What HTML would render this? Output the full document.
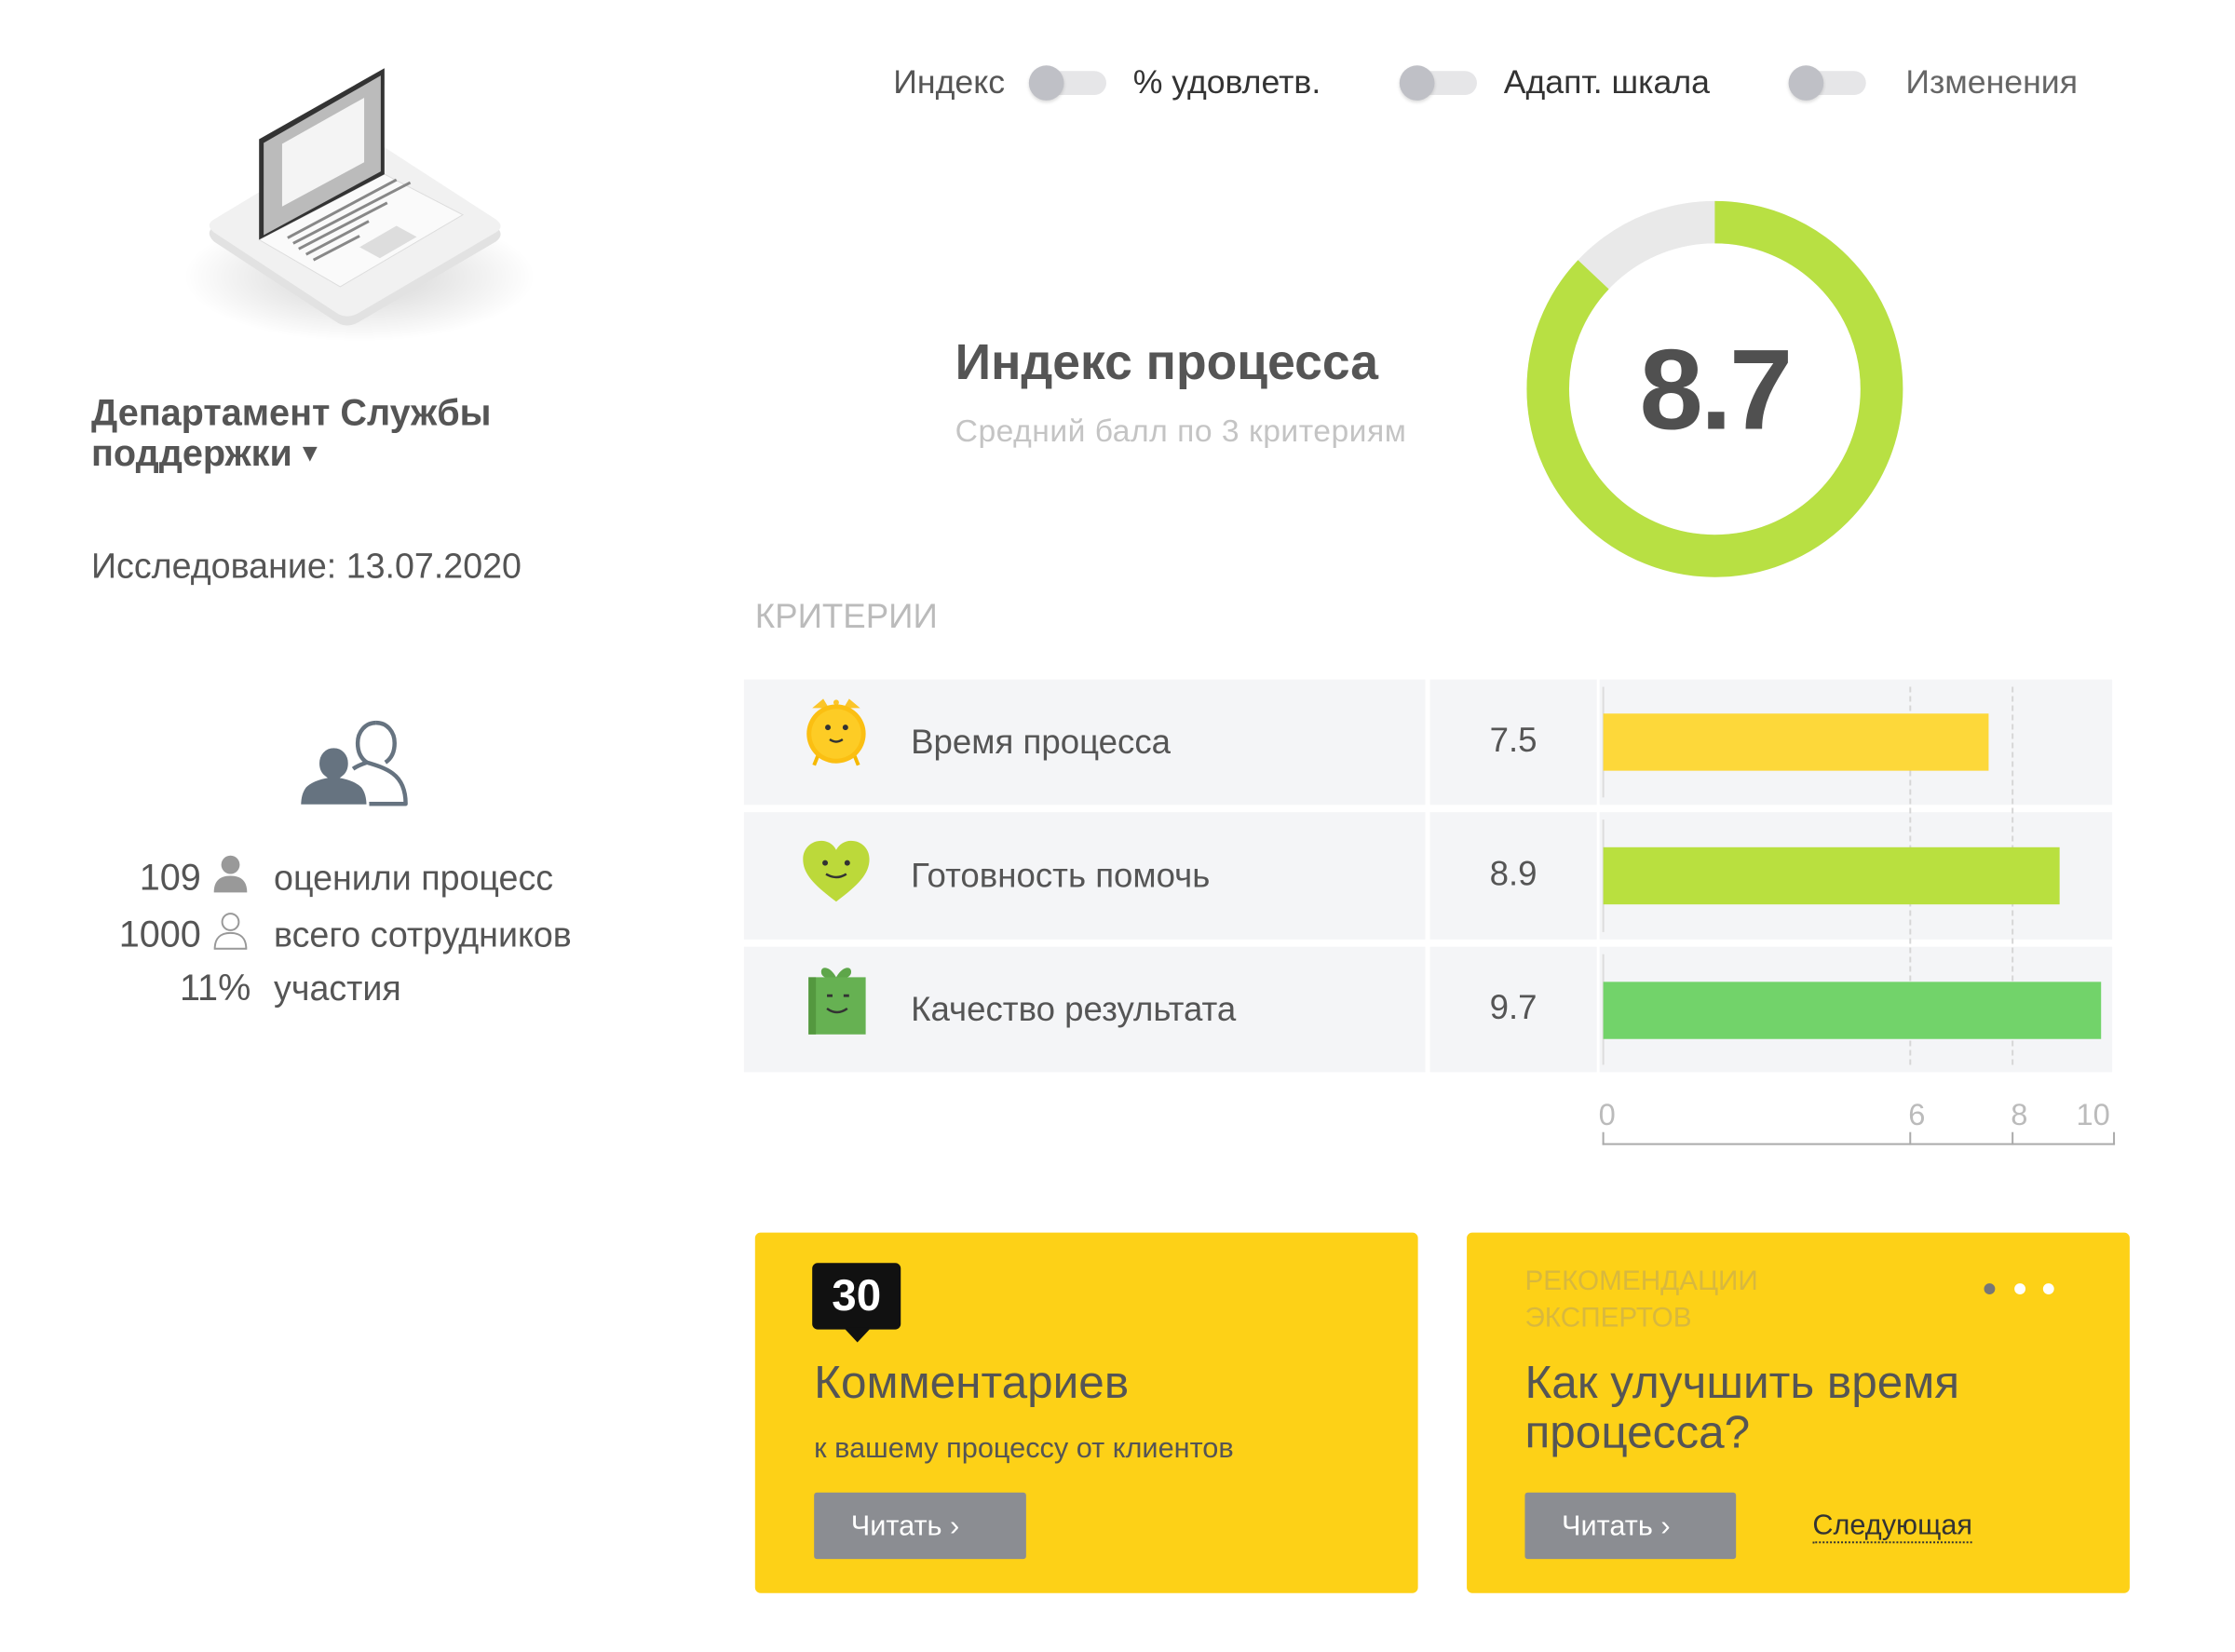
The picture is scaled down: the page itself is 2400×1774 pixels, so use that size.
<!DOCTYPE html>
<html><head><meta charset="utf-8">
<style>
*{margin:0;padding:0;box-sizing:border-box}
body{width:2400px;height:1774px;background:#fff;font-family:"Liberation Sans","DejaVu Sans",sans-serif;color:#555;position:relative;overflow:hidden}
#w{position:absolute;left:0;top:0;width:2400px;height:1774px;transform:scale(0.99);transform-origin:0 0}
.a{position:absolute;white-space:nowrap}
.tg{position:absolute;width:86px;height:38px;top:71px}
.tg .tr{position:absolute;left:10px;top:6px;width:74px;height:26px;border-radius:13px;background:#e6e6e8}
.tg .kn{position:absolute;left:0;top:0;width:38px;height:38px;border-radius:50%;background:#bfc0c6;box-shadow:0 2px 4px rgba(0,0,0,.15)}
.cell{position:absolute;background:#f4f5f7}
.bar{position:absolute;height:62px}
.dash{position:absolute;width:0;border-left:2px dashed #d6d6d6}
.card{position:absolute;background:#fdd117;border-radius:6px}
.btn{position:absolute;background:#8b8d92;color:#fff;font-size:31px;border-radius:3px;height:72px;line-height:72px;padding-left:40px}
</style></head><body><div id="w">

<!-- laptop -->
<svg class="a" style="left:200px;top:60px" width="420" height="320" viewBox="200 60 420 320">
<defs><radialGradient id="sh" cx="0.5" cy="0.5" r="0.5"><stop offset="0" stop-color="#000" stop-opacity=".18"/><stop offset="1" stop-color="#000" stop-opacity="0"/></radialGradient></defs>
<ellipse cx="390" cy="300" rx="190" ry="70" fill="url(#sh)"/>
<path d="M232 246 Q222 252 232 262 L366 350 Q376 356 388 350 L538 262 Q548 254 538 246 L402 158 Q390 150 378 158 Z" fill="#e2e2e2"/>
<path d="M232 238 Q222 244 232 252 L366 340 Q376 346 388 340 L538 252 Q548 246 538 238 L402 150 Q390 144 378 150 Z" fill="#f1f1f1"/>
<path d="M281 260 L417 189 L502 233 L369 311 Z" fill="#fafafa" stroke="#ddd"/>
<path d="M281 151 L417 74 L417 189 L281 260 Z" fill="#333"/>
<path d="M286 155 L413 82 L413 186 L286 255 Z" fill="#bbb"/>
<path d="M306 156 L395 106 L395 176 L306 224 Z" fill="#f4f4f4"/>
<g stroke="#888" stroke-width="3"><line x1="312" y1="258" x2="430" y2="195"/><line x1="318" y1="264" x2="445" y2="198"/><line x1="324" y1="270" x2="420" y2="220"/><line x1="332" y1="276" x2="400" y2="240"/><line x1="340" y1="282" x2="390" y2="256"/></g>
<path d="M390 268 L430 245 L452 257 L412 280 Z" fill="#ddd"/>
</svg>

<div class="a" style="left:99px;top:426px;font-size:40px;font-weight:bold;line-height:44px;color:#555">Департамент Службы<br>поддержки <span style="font-size:32px;position:relative;top:-4px">▾</span></div>
<div class="a" style="left:99px;top:594px;font-size:38px;color:#555">Исследование: 13.07.2020</div>

<!-- users icon -->
<svg class="a" style="left:322px;top:780px" width="126" height="96" viewBox="0 0 126 96">
<path d="M86 4c-12 0-20 10-20 22 0 10 4 17 10 21-6 2-11 4-15 7 M76 47c10 3 20 6 28 12 8 6 14 16 14 33H70" fill="none" stroke="#667380" stroke-width="4.5" stroke-linejoin="round"/>
<path d="M86 4c12 0 20 10 20 22 0 10-4 17-10 21" fill="none" stroke="#667380" stroke-width="4.5"/>
<path d="M40 30c-10 0-17 8-17 18 0 7 3 12 7 15-9 2-16 5-21 10-4 5-6 12-6 21h74c0-9-2-16-6-21-5-5-12-8-21-10 4-3 7-8 7-15 0-10-7-18-17-18z" fill="#667380" stroke="#fff" stroke-width="3"/>
</svg>

<div class="a" style="left:0;width:218px;text-align:right;top:930px;font-size:40px;color:#555">109</div>
<svg class="a" style="left:230px;top:926px" width="40" height="44" viewBox="0 0 40 44"><circle cx="20" cy="12" r="10" fill="#999"/><path d="M2 42c0-12 6-18 18-18s18 6 18 18z" fill="#999"/></svg>
<div class="a" style="left:297px;top:932px;font-size:38px">оценили процесс</div>
<div class="a" style="left:0;width:218px;text-align:right;top:992px;font-size:40px;color:#555">1000</div>
<svg class="a" style="left:230px;top:988px" width="40" height="44" viewBox="0 0 40 44"><circle cx="20" cy="12" r="9" fill="none" stroke="#999" stroke-width="2"/><path d="M3 41c0-11 6-17 17-17s17 6 17 17z" fill="none" stroke="#999" stroke-width="2"/></svg>
<div class="a" style="left:297px;top:994px;font-size:38px">всего сотрудников</div>
<div class="a" style="left:0;width:272px;text-align:right;top:1050px;font-size:40px;color:#555">11%</div>
<div class="a" style="left:297px;top:1052px;font-size:38px">участия</div>

<!-- toggles -->
<div class="a" style="left:969px;top:68px;font-size:36px;color:#555">Индекс</div>
<div class="tg" style="left:1116px"><div class="tr"></div><div class="kn"></div></div>
<div class="a" style="left:1229px;top:68px;font-size:36px;color:#333">% удовлетв.</div>
<div class="tg" style="left:1518px"><div class="tr"></div><div class="kn"></div></div>
<div class="a" style="left:1631px;top:68px;font-size:36px;color:#333">Адапт. шкала</div>
<div class="tg" style="left:1940px"><div class="tr"></div><div class="kn"></div></div>
<div class="a" style="left:2067px;top:68px;font-size:36px;color:#666">Изменения</div>

<div class="a" style="left:1036px;top:362px;font-size:54px;font-weight:bold;color:#555">Индекс процесса</div>
<div class="a" style="left:1036px;top:449px;font-size:34px;color:#c4c4c4;letter-spacing:0.5px">Средний балл по 3 критериям</div>

<svg class="a" style="left:1650px;top:212px" width="420" height="420" viewBox="0 0 420 420">
<circle cx="210" cy="210" r="181" fill="none" stroke="#e9e9e9" stroke-width="46"/>
<circle cx="210" cy="210" r="181" fill="none" stroke="#b8e043" stroke-width="46" stroke-dasharray="989.4 1137.3" transform="rotate(-90 210 210)"/>
</svg>
<div class="a" style="left:1660px;width:400px;text-align:center;top:352px;font-size:124px;font-weight:bold;color:#505050;letter-spacing:-3px">8.7</div>

<div class="a" style="left:819px;top:648px;font-size:37px;color:#bbb">КРИТЕРИИ</div>

<!-- table rows -->
<div class="cell" style="left:807px;top:737px;width:739px;height:136px"></div>
<div class="cell" style="left:1551px;top:737px;width:181px;height:136px"></div>
<div class="cell" style="left:1735px;top:737px;width:556px;height:136px"></div>
<div class="cell" style="left:807px;top:881px;width:739px;height:138px"></div>
<div class="cell" style="left:1551px;top:881px;width:181px;height:138px"></div>
<div class="cell" style="left:1735px;top:881px;width:556px;height:138px"></div>
<div class="cell" style="left:807px;top:1027px;width:739px;height:136px"></div>
<div class="cell" style="left:1551px;top:1027px;width:181px;height:136px"></div>
<div class="cell" style="left:1735px;top:1027px;width:556px;height:136px"></div>

<div class="a" style="left:1738px;top:745px;width:2px;height:120px;background:#ddd"></div>
<div class="a" style="left:1738px;top:889px;width:2px;height:122px;background:#ddd"></div>
<div class="a" style="left:1738px;top:1035px;width:2px;height:120px;background:#ddd"></div>
<div class="dash" style="left:2071px;top:745px;height:410px"></div>
<div class="dash" style="left:2182px;top:745px;height:410px"></div>

<div class="bar" style="left:1739px;top:774px;width:418px;background:#fdd83a"></div>
<div class="bar" style="left:1739px;top:919px;width:495px;background:#b9e03f"></div>
<div class="bar" style="left:1739px;top:1065px;width:540px;background:#72d36a"></div>

<!-- icons -->
<svg class="a" style="left:871px;top:754px" width="72" height="80" viewBox="0 0 72 80">
<path d="M10 14 L22 4 L28 14 Z M62 14 L50 4 L44 14 Z" fill="#fbc52a"/>
<circle cx="36" cy="8" r="3" fill="#fbc52a"/>
<path d="M16 66 L12 76 M56 66 L60 76" stroke="#f6b900" stroke-width="4"/>
<circle cx="36" cy="42" r="32" fill="#fbbf12"/><circle cx="36" cy="42" r="27" fill="#fdcc25"/>
<circle cx="27" cy="35" r="3" fill="#333"/><circle cx="46" cy="35" r="3" fill="#333"/>
<path d="M29 48 Q36 53 43 48" stroke="#333" stroke-width="2.5" fill="none"/>
</svg>
<svg class="a" style="left:869px;top:910px" width="76" height="70" viewBox="0 0 76 70">
<path d="M38 68 C14 50 2 38 2 22 C2 10 11 2 22 2 C29 2 35 6 38 12 C41 6 47 2 54 2 C65 2 74 10 74 22 C74 38 62 50 38 68 Z" fill="#bcd93a"/>
<circle cx="26" cy="26" r="3" fill="#333"/><circle cx="50" cy="26" r="3" fill="#333"/>
<path d="M27 38 Q38 45 49 38" stroke="#333" stroke-width="2.5" fill="none"/>
</svg>
<svg class="a" style="left:873px;top:1044px" width="68" height="80" viewBox="0 0 68 80">
<path d="M34 16 C26 2 16 4 18 12 C20 18 30 18 34 16 C38 18 48 18 50 12 C52 4 42 2 34 16Z" fill="#5ea64a"/>
<rect x="4" y="16" width="62" height="62" fill="#66b152"/>
<rect x="4" y="16" width="8" height="62" fill="#54983f"/>
<path d="M24 36 h6 M42 36 h6" stroke="#333" stroke-width="3"/>
<path d="M24 50 Q35 58 46 50" stroke="#333" stroke-width="2.5" fill="none"/>
</svg>

<div class="a" style="left:988px;top:784px;font-size:37px;color:#555">Время процесса</div>
<div class="a" style="left:988px;top:929px;font-size:37px;color:#555">Готовность помочь</div>
<div class="a" style="left:988px;top:1074px;font-size:37px;color:#555">Качество результата</div>
<div class="a" style="left:1551px;width:181px;text-align:center;top:782px;font-size:37px;color:#555">7.5</div>
<div class="a" style="left:1551px;width:181px;text-align:center;top:927px;font-size:37px;color:#555">8.9</div>
<div class="a" style="left:1551px;width:181px;text-align:center;top:1072px;font-size:37px;color:#555">9.7</div>

<!-- axis -->
<div class="a" style="left:1738px;top:1240px;width:556px;height:2px;background:#aaa"></div>
<div class="a" style="left:1738px;top:1228px;width:2px;height:14px;background:#aaa"></div>
<div class="a" style="left:2071px;top:1228px;width:2px;height:14px;background:#aaa"></div>
<div class="a" style="left:2182px;top:1228px;width:2px;height:14px;background:#aaa"></div>
<div class="a" style="left:2292px;top:1228px;width:2px;height:14px;background:#aaa"></div>
<div class="a" style="left:1734px;top:1190px;font-size:33px;color:#bbb">0</div>
<div class="a" style="left:2070px;top:1190px;font-size:33px;color:#bbb">6</div>
<div class="a" style="left:2181px;top:1190px;font-size:33px;color:#bbb">8</div>
<div class="a" style="left:2252px;top:1190px;font-size:33px;color:#bbb">10</div>

<!-- cards -->
<div class="card" style="left:819px;top:1337px;width:719px;height:391px"></div>
<div class="a" style="left:881px;top:1370px;width:96px;height:72px;background:#111;border-radius:6px;color:#fff;font-size:48px;font-weight:bold;text-align:center;line-height:72px">30</div>
<div class="a" style="left:915px;top:1440px;width:0;height:0;border-left:15px solid transparent;border-right:15px solid transparent;border-top:16px solid #111"></div>
<div class="a" style="left:883px;top:1470px;font-size:50px;color:#555">Комментариев</div>
<div class="a" style="left:883px;top:1553px;font-size:31px;color:#555">к вашему процессу от клиентов</div>
<div class="btn" style="left:883px;top:1619px;width:230px">Читать ›</div>

<div class="card" style="left:1591px;top:1337px;width:719px;height:391px"></div>
<div class="a" style="left:1654px;top:1370px;font-size:30px;color:#d8b83e;line-height:40px">РЕКОМЕНДАЦИИ<br>ЭКСПЕРТОВ</div>
<div class="a" style="left:2152px;top:1392px;width:12px;height:12px;border-radius:50%;background:#777"></div>
<div class="a" style="left:2185px;top:1392px;width:12px;height:12px;border-radius:50%;background:#fff"></div>
<div class="a" style="left:2216px;top:1392px;width:12px;height:12px;border-radius:50%;background:#fff"></div>
<div class="a" style="left:1654px;top:1472px;font-size:50px;color:#555;line-height:54px">Как улучшить время<br>процесса?</div>
<div class="btn" style="left:1654px;top:1619px;width:229px">Читать ›</div>
<div class="a" style="left:1966px;top:1636px;font-size:31px;color:#333;border-bottom:2px dotted #333;line-height:36px">Следующая</div>

</div></body></html>
